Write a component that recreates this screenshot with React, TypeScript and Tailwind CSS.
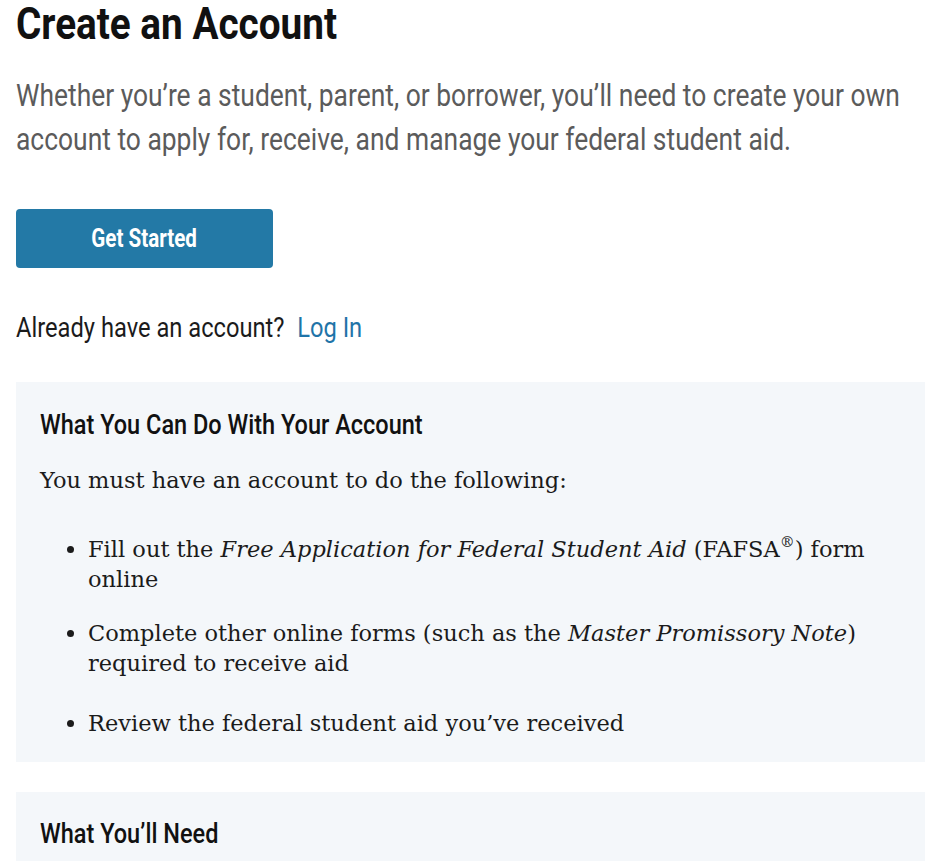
const heading = "font-['Roboto','Liberation_Sans',sans-serif]"
const serif = "font-['DejaVu_Serif','Liberation_Serif',serif]"

const items = [
  {
    key: 'fafsa',
    gap: 'mb-[24px]',
    body: (
      <>
        Fill out the <em>Free Application for Federal Student Aid</em> (FAFSA
        <sup className="-top-[10px] text-[15px] leading-none">®</sup>) form online
      </>
    ),
  },
  {
    key: 'forms',
    gap: 'mb-[30px]',
    body: (
      <>
        Complete other online forms (such as the <em>Master Promissory Note</em>) required to receive aid
      </>
    ),
  },
  {
    key: 'review',
    gap: 'mb-0',
    body: <>Review the federal student aid you’ve received</>,
  },
]

export default function App() {
  return (
    <div className="min-h-screen overflow-x-hidden bg-white pl-4 pr-[2px] pt-[2px] text-[#1b1b1b]">
      <h1
        className={`${heading} w-[117%] origin-left scale-x-[0.86] text-[45px] font-bold leading-[44px] text-[#111]`}
      >
        Create an Account
      </h1>
      <p
        className={`${heading} mt-[28px] w-[117.5%] origin-left scale-x-[0.852] text-[31px] leading-[44px] text-[#5b5b5b]`}
      >
        Whether you’re a student, parent, or borrower, you’ll need to create your own account to apply for,
        receive, and manage your federal student aid.
      </p>

      <button className="mt-[47px] flex h-[59px] w-[257px] items-center justify-center rounded-[4px] bg-[#2379a6]">
        <span className={`${heading} inline-block scale-x-[0.823] text-[25px] font-bold text-white`}>Get Started</span>
      </button>

      <p
        className={`${heading} mt-[45px] w-[118%] origin-left scale-x-[0.846] text-[28px] leading-[30px] text-[#1b1b1b]`}
      >
        Already have an account?{' '}
        <a href="#" className="ml-[8px] text-[#1f74a8]">
          Log In
        </a>
      </p>

      <section className="mt-[39px] bg-[#f4f7fa] px-6 pt-[27px] pb-[24px]">
        <h2
          className={`${heading} w-[119%] origin-left scale-x-[0.84] text-[28px] font-medium leading-[32px] text-[#111]`}
        >
          What You Can Do With Your Account
        </h2>
        <p className={`${serif} mt-[24px] text-[22.5px] leading-[30px]`}>
          You must have an account to do the following:
        </p>
        <ul className={`${serif} mt-[39px] ml-[48px] list-disc text-[22.5px] leading-[30px]`}>
          {items.map((item) => (
            <li key={item.key} className={item.gap}>
              {item.body}
            </li>
          ))}
        </ul>
      </section>

      <section className="mt-[30px] bg-[#f4f7fa] px-6 pt-[26px] pb-[40px]">
        <h2
          className={`${heading} w-[119%] origin-left scale-x-[0.84] text-[28px] font-medium leading-[32px] text-[#111]`}
        >
          What You’ll Need
        </h2>
      </section>
    </div>
  )
}
